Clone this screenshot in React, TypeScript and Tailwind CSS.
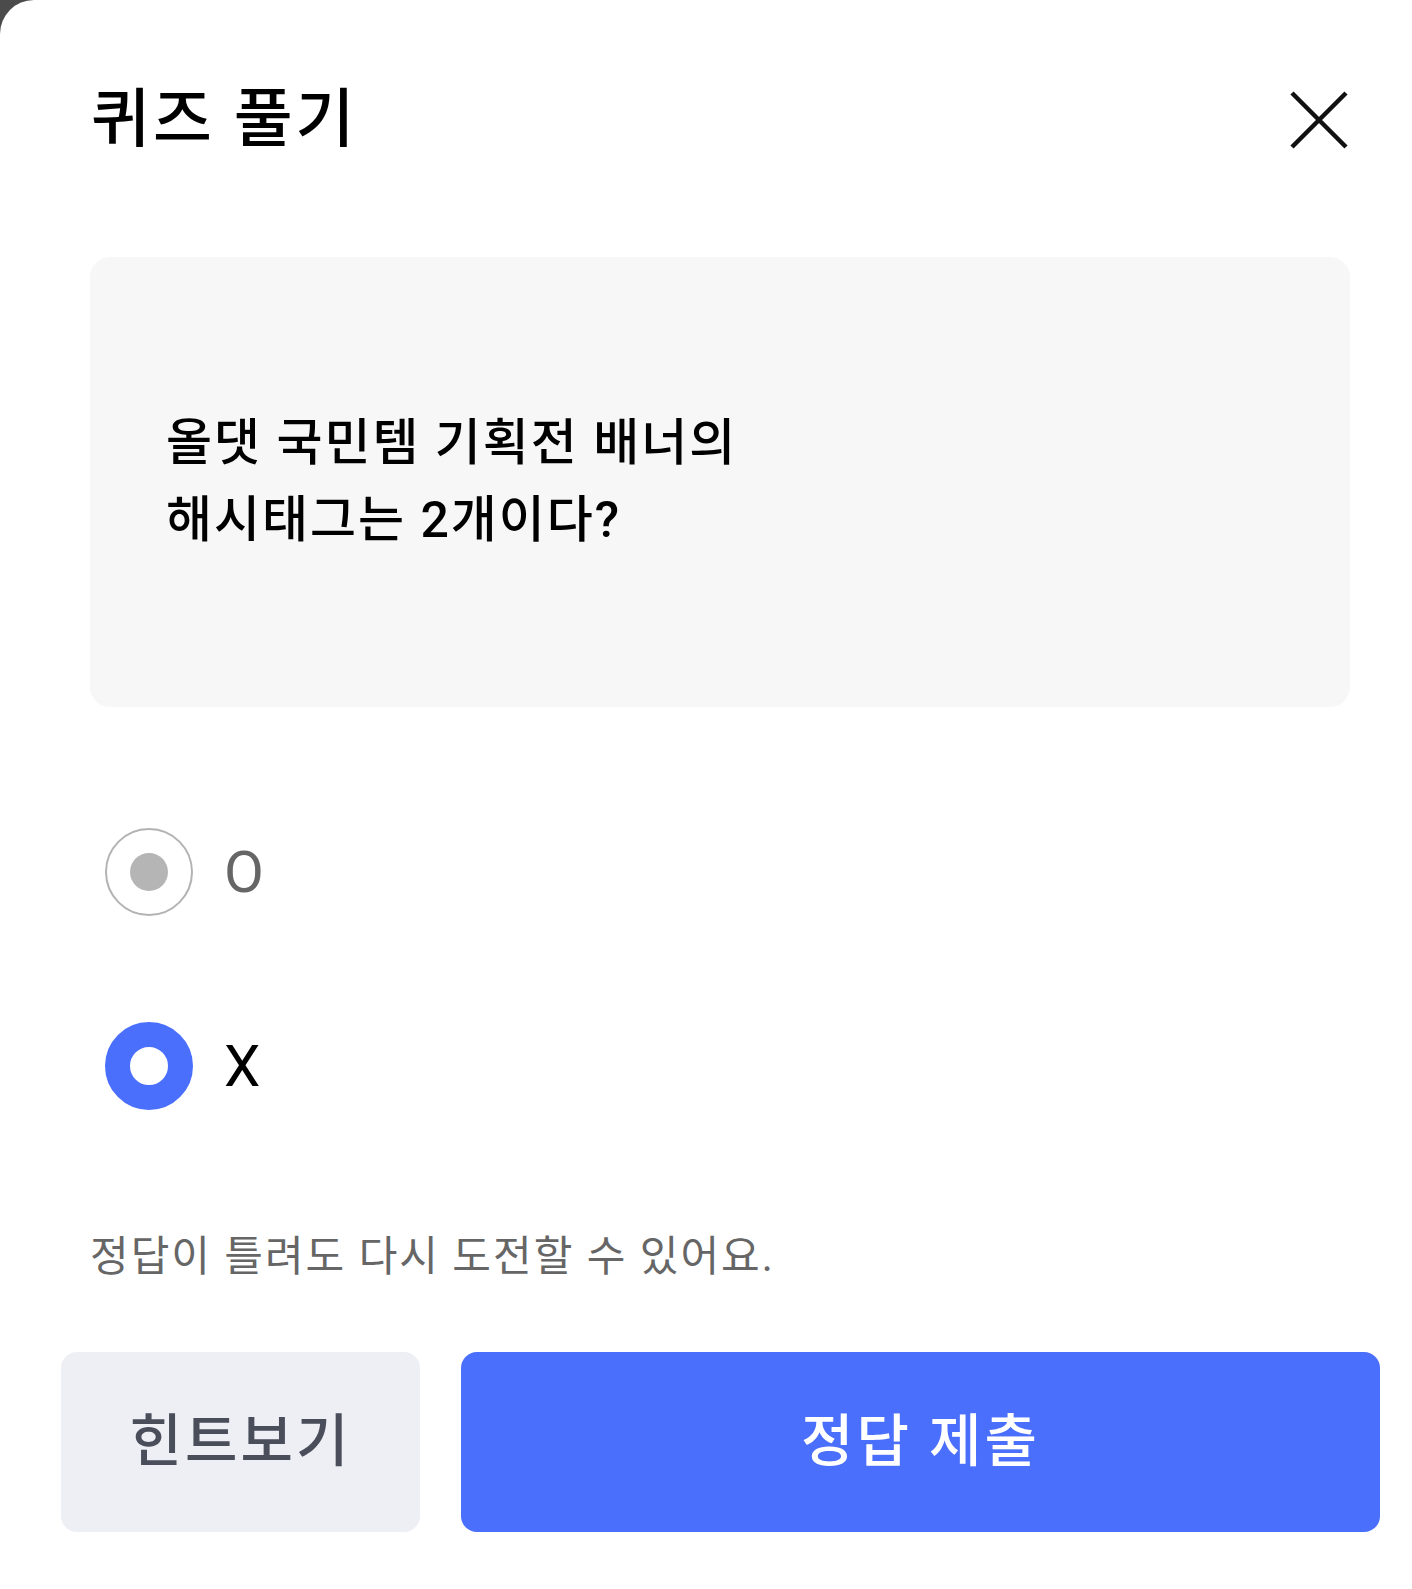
import React, { useState } from 'react';

const font = "font-['Roboto','Noto_Sans_CJK_KR',sans-serif]";

const options = [
  { id: 'o', label: 'O' },
  { id: 'x', label: 'X' },
];

const Radio = ({ checked }: { checked: boolean }) =>
  checked ? (
    <span className="w-[88px] h-[88px] rounded-full border-[25px] border-[#4a6ffd] bg-white shrink-0" />
  ) : (
    <span className="w-[88px] h-[88px] rounded-full border-[2.5px] border-[#b3b3b3] bg-white shrink-0 flex items-center justify-center">
      <span className="w-[38px] h-[38px] rounded-full bg-[#b5b5b5]" />
    </span>
  );

const App = () => {
  const [answer, setAnswer] = useState('x');

  return (
    <div className={`min-h-screen bg-[#4b4b4b] ${font}`}>
      <div className="bg-white rounded-tl-[34px] min-h-[1589px] pt-[60px] pb-[57px]">
        {/* header */}
        <div className="flex items-center justify-between h-[120px] pl-[91px] pr-[63px]">
          <h1 className="text-[64px] leading-none font-medium text-black tracking-[3px]">퀴즈 풀기</h1>
          <button className="w-[60px] h-[60px] flex items-center justify-center">
            <svg width="58" height="58" viewBox="0 0 58 58" fill="none">
              <path d="M2 2L56 56M56 2L2 56" stroke="#111" strokeWidth="4.5" />
            </svg>
          </button>
        </div>

        {/* question */}
        <div className="mt-[77px] ml-[90px] mr-[62px] h-[450px] rounded-[20px] bg-[#f7f7f7] flex items-center pl-[76px]">
          <p className="text-[50px] leading-[77px] font-medium text-black tracking-[2px]">
            올댓 국민템 기획전 배너의
            <br />
            해시태그는 2개이다?
          </p>
        </div>

        {/* options */}
        <div className="mt-[121px] ml-[105px] flex flex-col gap-[106px]">
          {options.map((opt) => (
            <label
              key={opt.id}
              className="flex items-center gap-[31px] cursor-pointer"
              onClick={() => setAnswer(opt.id)}
            >
              <Radio checked={answer === opt.id} />
              <span
                className={`text-[58px] leading-none font-['Roboto',sans-serif] ${
                  answer === opt.id ? 'text-black' : 'text-[#666]'
                }`}
              >
                {opt.label}
              </span>
            </label>
          ))}
        </div>

        <p className="mt-[124px] ml-[90px] text-[42px] leading-[46px] text-[#666] tracking-[2px]">
          정답이 틀려도 다시 도전할 수 있어요.
        </p>

        {/* actions */}
        <div className="mt-[72px] ml-[61px] mr-[32px] flex gap-[41px]">
          <button className="w-[359px] h-[180px] rounded-[16px] bg-[#eeeff4] text-[57px] font-medium text-[#4a4e5b] tracking-[3px]">
            힌트보기
          </button>
          <button className="flex-1 h-[180px] rounded-[16px] bg-[#4a6ffd] text-[57px] font-medium text-white tracking-[3px]">
            정답 제출
          </button>
        </div>
      </div>
    </div>
  );
};

export default App;
